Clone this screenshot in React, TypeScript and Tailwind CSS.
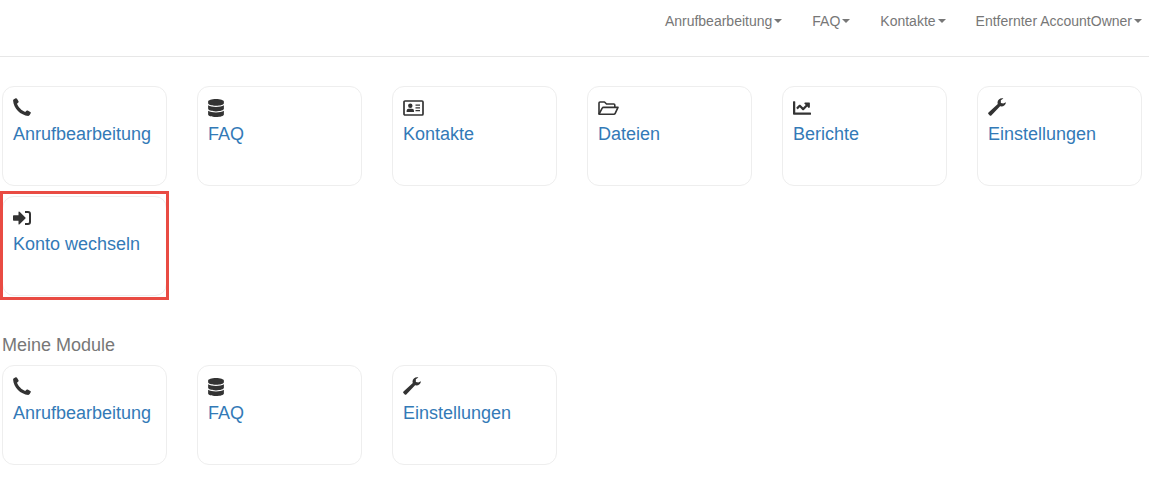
import { ReactNode } from 'react'
import { FaChartLine, FaDatabase } from 'react-icons/fa'

interface Module {
  name: string
  icon: ReactNode
  highlighted?: boolean
}

function PhoneIcon() {
  return (
    <svg viewBox="0 0 18 18" className="mb-0.5 h-[18px] w-[18px]" fill="currentColor" aria-hidden="true">
      <path d="M.9 1.3 2.7.3Q3.5-.1 4 .7L5.5 3.3Q5.8 4 5.3 4.6L4 5.8C5.2 9.2 8.6 12.6 12.2 14L13.4 12.7Q14 12.2 14.7 12.5L17.3 14Q18.1 14.5 17.7 15.3L16.7 17.1Q16.2 17.9 15.3 17.9C7.6 17.4.6 10.5.1 2.8Q0 1.8.9 1.3Z" />
    </svg>
  )
}

function CardIcon() {
  return (
    <svg viewBox="0 0 21 18" className="h-[18px] w-[21px]" fill="currentColor" aria-hidden="true">
      <rect x="1" y="2" width="19" height="14" rx="1" fill="none" stroke="currentColor" strokeWidth="1.7" />
      <circle cx="7.3" cy="6.8" r="2.2" />
      <path d="M3.6 12.9V11.8Q3.6 9.7 5.6 9.7H9Q11 9.7 11 11.8V12.9Z" />
      <path d="M12.5 5.5h4.5v1.2h-4.5zM12.5 8.3h4.5v1.2h-4.5zM12.5 11.1h4.5v1.2h-4.5z" />
    </svg>
  )
}

function FolderIcon() {
  return (
    <svg
      viewBox="0 0 21 18"
      className="h-[18px] w-[21px]"
      fill="none"
      stroke="currentColor"
      strokeWidth="1.6"
      strokeLinejoin="round"
      aria-hidden="true"
    >
      <path d="M1 15V4Q1 3 2 3H6.5L8.5 5H15.8Q16.8 5 16.8 6V8.3" />
      <path d="M1 15.2 4.2 9.2Q4.6 8.4 5.5 8.4H20L17.2 14.4Q16.8 15.3 15.8 15.3H1Z" />
    </svg>
  )
}

function WrenchIcon() {
  return (
    <svg viewBox="0 0 18 18" className="mb-0.5 h-[18px] w-[18px]" fill="currentColor" aria-hidden="true">
      <path d="M15.4.4C12.6-.4 9.6 1.4 9.5 4.4Q9.5 5.2 9.8 6L.5 14.5Q-.3 15.3.4 16.1L1.8 17.5Q2.6 18.2 3.3 17.4L12.1 8.3C15 9 17.9 7.1 17.9 4.2L15.3 5.6 12.9 5 12.8 2.2Z" />
    </svg>
  )
}

function SignInIcon() {
  return (
    <svg viewBox="0 0 18 18" className="h-[18px] w-[18px]" fill="currentColor" aria-hidden="true">
      <path d="M0 7Q0 6.2.8 6.2H5.5V3.3Q5.5 1.9 6.6 2.8L12.4 8.4Q13 9 12.4 9.6L6.6 15.2Q5.5 16.1 5.5 14.7V11.8H.8Q0 11.8 0 11Z" />
      <path d="M12 3H15Q17 3 17 5V13Q17 15 15 15H12" fill="none" stroke="currentColor" strokeWidth="2" />
    </svg>
  )
}

const phone: Module = { name: 'Anrufbearbeitung', icon: <PhoneIcon /> }
const faq: Module = { name: 'FAQ', icon: <FaDatabase className="h-[18px] w-4" /> }
const settings: Module = { name: 'Einstellungen', icon: <WrenchIcon /> }

const modules: Module[] = [
  phone,
  faq,
  { name: 'Kontakte', icon: <CardIcon /> },
  { name: 'Dateien', icon: <FolderIcon /> },
  { name: 'Berichte', icon: <FaChartLine className="size-[18px]" /> },
  settings,
  { name: 'Konto wechseln', icon: <SignInIcon />, highlighted: true },
]

const myModules: Module[] = [phone, faq, settings]

const menus = ['Anrufbearbeitung', 'FAQ', 'Kontakte', 'Entfernter AccountOwner']

function ModuleCard({ name, icon, highlighted }: Module) {
  return (
    <li className="relative">
      <a
        href="#"
        className="block min-h-[100px] rounded-xl border border-[#eee] p-[10px] text-lg leading-6 text-[#337ab7] hover:underline"
      >
        <span className="flex h-[22px] items-center text-[#333]">{icon}</span>
        <span className="block pt-[3px]">{name}</span>
      </a>
      {highlighted && (
        <span className="pointer-events-none absolute -inset-x-0.5 -top-[5px] -bottom-1 border-3 border-[#e94b43]" />
      )}
    </li>
  )
}

function ModuleGrid({ items }: { items: Module[] }) {
  return (
    <ul className="grid grid-cols-6 gap-x-[30px] gap-y-[10px]">
      {items.map(item => <ModuleCard key={item.name} {...item} />)}
    </ul>
  )
}

export default function App() {
  return (
    <div className="bg-white font-['Liberation_Sans',Arial,sans-serif] text-[#777]">
      <nav className="flex h-[57px] justify-end gap-[30px] border-b border-[#e7e7e7] pt-[11px] pr-[7px] text-sm">
        {menus.map(label => (
          <button key={label} type="button" className="flex h-5 cursor-pointer items-center gap-0.5 hover:text-[#333]">
            {label}
            <span className="border-x-4 border-t-4 border-x-transparent border-t-current" />
          </button>
        ))}
      </nav>
      <main className="pt-[29px] pr-[7px] pb-6 pl-0.5">
        <ModuleGrid items={modules} />
        <h2 className="mt-9 mb-2 pt-px text-lg leading-6">Meine Module</h2>
        <ModuleGrid items={myModules} />
      </main>
    </div>
  )
}
